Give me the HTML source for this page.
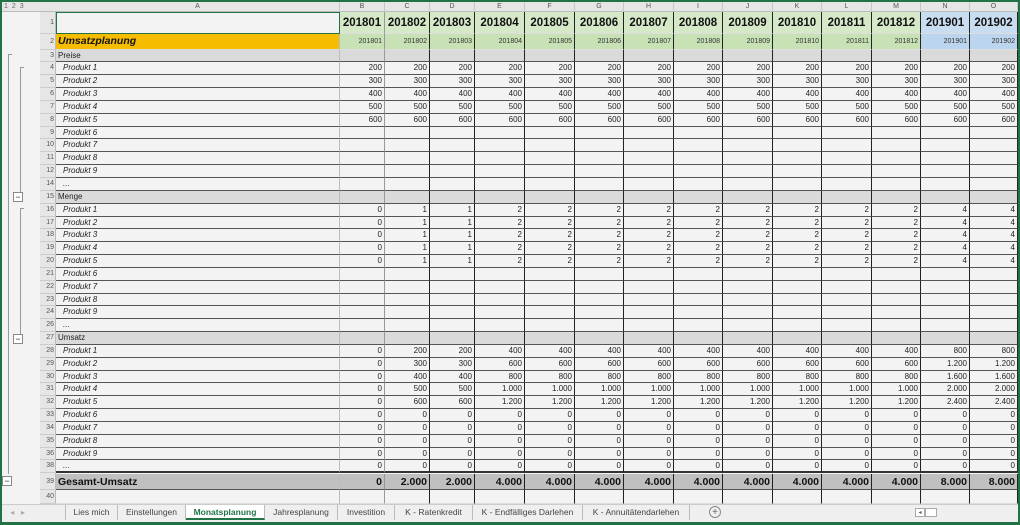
<!DOCTYPE html>
<html><head><meta charset="utf-8"><style>
body{margin:0;width:1020px;height:525px;overflow:hidden;background:#217346;font-family:"Liberation Sans",Arial,sans-serif;}
#w{position:absolute;left:2px;top:2px;width:1016px;height:520px;background:#f3f3f3;overflow:hidden}
.c{position:absolute;box-sizing:border-box;white-space:nowrap;overflow:hidden;font-size:8px;color:#222}
</style></head><body><div id="w"></div>
<script>
var W=document.getElementById('w');
function d(x,y,w,h,st,t){var e=document.createElement('div');e.className='c';e.style.cssText='left:'+(x-2)+'px;top:'+(y-2)+'px;width:'+w+'px;height:'+h+'px;'+(st||'');if(t!=null)e.innerHTML=t;W.appendChild(e);return e;}
var cx=[56,340,385,430,475,525,575,624,674,723,773,822,872,921,970,1018];
var L=['A','B','C','D','E','F','G','H','I','J','K','L','M','N','O'];
d(0,2,1020,10,'background:#e6e6e6;border-bottom:1px solid #bbb');
for(var i=0;i<15;i++)d(cx[i],2,cx[i+1]-cx[i],10,'border-right:1px solid #c8c8c8;text-align:center;font-size:7px;line-height:10px;color:#555',L[i]);
d(2,3,36,8,'font-size:7px;color:#666;line-height:8px;letter-spacing:4px;padding-left:2px','123');
d(40,12,16,492,'background:#e6e6e6;border-right:1px solid #bbb');
var rows=[];rows.push({n:1,y:12,h:22});rows.push({n:2,y:34,h:15.6});
var y=49.6;var vis=[];for(var r=3;r<=38;r++){if(r==13||r==25||r==37)continue;vis.push(r);}
vis.forEach(function(r){rows.push({n:r,y:y,h:12.84});y+=12.84;});
rows.push({n:39,y:474,h:16});rows.push({n:40,y:490,h:14});
function fmt(v){return v>=1000?(Math.floor(v/1000)+'.'+String(v%1000).padStart(3,'0')):String(v);}
var mult=[0,1,1,2,2,2,2,2,2,2,2,2,4,4];
rows.forEach(function(R){
 var n=R.n,yy=R.y,h=R.h;
 d(40,yy,16,h,'text-align:right;padding-right:2px;font-size:7px;color:#555;line-height:'+h+'px;border-bottom:1px solid #ccc',n);
 var sec=(n==3||n==15||n==27);
 var bgA='#f3f3f3',txt='',st='';
 if(n==2){bgA='#f5bc00';txt='Umsatzplanung';st='font-weight:bold;font-style:italic;font-size:10.5px;color:#111';}
 else if(sec){bgA='#dadada';txt=n==3?'Preise':n==15?'Menge':'Umsatz';}
 else if(n==39){bgA='#c0c0c0';txt='Gesamt-Umsatz';st='font-weight:bold;font-size:10.5px;color:#111';}
 else if(n>=4&&n<=38){var k=(n-3)%12;txt=k==11?'...':'Produkt '+k;st='font-style:italic;padding-left:7px';}
 var bb=(n>=3&&n<=39)?'border-bottom:1px solid #555;':'border-bottom:1px solid #ddd;';
 if(n==38)bb='border-bottom:2px solid #333;';
 var bbA=n==1?'border:1px solid #217346;':bb;
 d(56,yy,284,h,'background:'+bgA+';line-height:'+h+'px;padding-left:2px;border-right:1px solid #bbb;'+bbA+st,txt);
 for(var c=1;c<15;c++){
  var x=cx[c],w=cx[c+1]-x,bg='#f3f3f3',t='',s='text-align:right;padding-right:2px;line-height:'+h+'px;';
  var per='20'+(c<13?'18'+String(c).padStart(2,'0'):'19'+String(c-12).padStart(2,'0'));
  var blue=c>=13;
  if(n==1){bg=blue?'#c9ddf1':'#d5e8c8';t=per;s+='font-weight:bold;font-size:11.5px;color:#111;text-align:center;padding:0;';}
  else if(n==2){bg=blue?'#bcd5ee':'#c8e2b6';t=per;s+='font-size:7px;color:#333;';}
  else if(sec){bg='#dadada';}
  else if(n==39){bg='#c0c0c0';t=fmt([0,2000,2000,4000,4000,4000,4000,4000,4000,4000,4000,4000,8000,8000][c-1]);s+='font-weight:bold;font-size:10.5px;color:#111;';}
  else if(n>=4&&n<=8)t=String((n-2)*100);
  else if(n>=16&&n<=20)t=String(mult[c-1]);
  else if(n>=28&&n<=32)t=fmt((n-26)*100*mult[c-1]);
  else if(n>=33&&n<=38)t='0';
  var br=(c==1?'#999':'#222');
  d(x,yy,w,h,'background:'+bg+';border-right:1px solid '+br+';'+bb+s,t);
 }
});
d(8,54,1,420,'background:#999');d(8,54,4,1,'background:#999');
d(20,67,1,130,'background:#999');d(20,67,4,1,'background:#999');
d(20,208,1,130,'background:#999');d(20,208,4,1,'background:#999');
[[13,192],[13,334],[2,476]].forEach(function(p){d(p[0],p[1],10,10,'border:1px solid #888;background:#fff;text-align:center;line-height:8px;font-size:9px;color:#333','−');});
d(0,504,1020,18,'background:#efefef;border-top:1px solid #ccc');
var tabs=[[65,118,'Lies mich'],[118,186,'Einstellungen'],[186,265,'Monatsplanung'],[265,338,'Jahresplanung'],[338,395,'Investition'],[395,473,'K - Ratenkredit'],[473,583,'K - Endfälliges Darlehen'],[583,690,'K - Annuitätendarlehen']];
tabs.forEach(function(t,i){d(t[0],505,t[1]-t[0],15,'text-align:center;font-size:8.5px;color:#444;line-height:14px;border-right:1px solid #bbb;'+(i==0?'border-left:1px solid #bbb;':'')+(i==2?'background:#fff;color:#217346;font-weight:bold;border-bottom:2px solid #217346;':''),t[2]);});
d(8,507,40,12,'font-size:8px;color:#aaa;line-height:12px','&nbsp;◂ &nbsp; ▸');
d(709,506,12,12,'border:1px solid #888;border-radius:50%;text-align:center;line-height:11px;font-size:10px;color:#666','+');
d(915,508,10,9,'border:1px solid #aaa;background:#fff;font-size:6px;text-align:center;line-height:9px;color:#555','◂');
d(925,508,12,9,'border:1px solid #aaa;background:#fff');
</script></body></html>
